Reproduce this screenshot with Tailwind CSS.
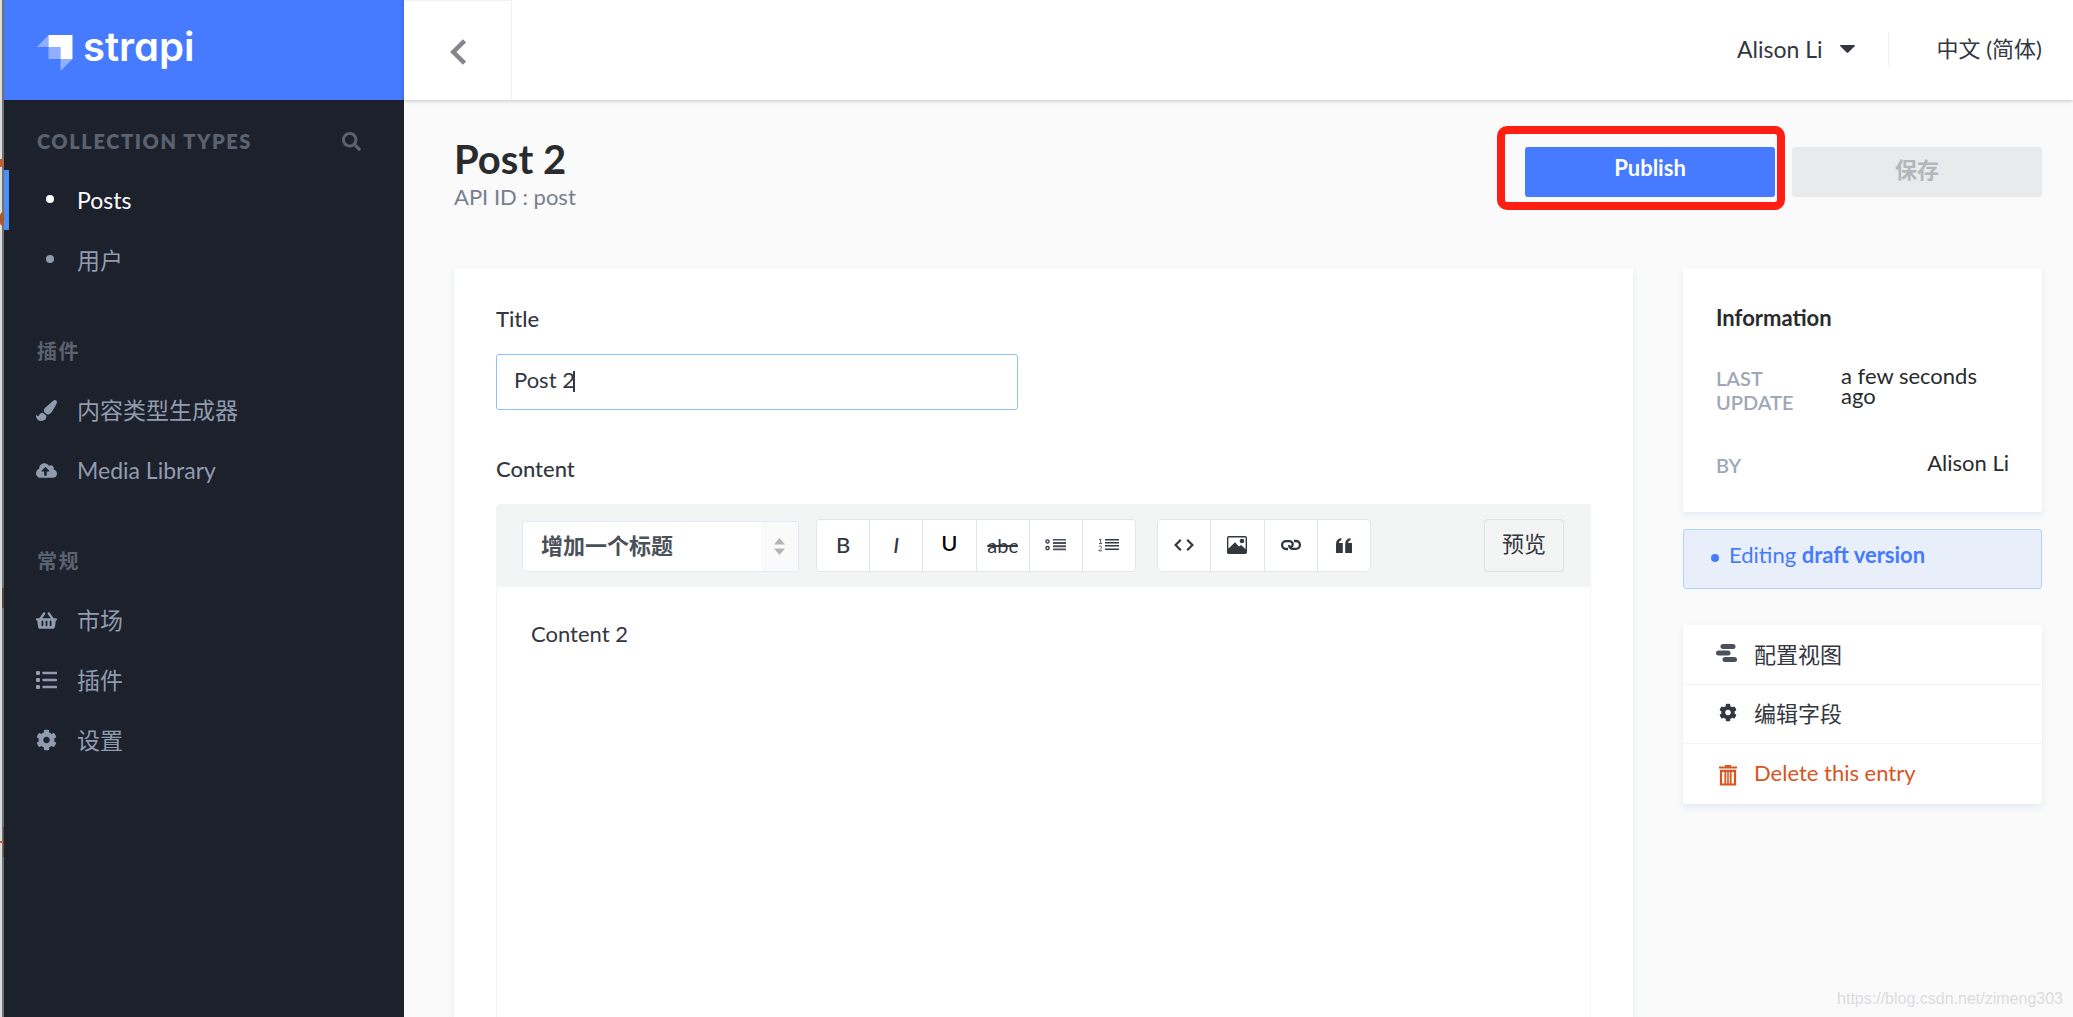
<!DOCTYPE html>
<html lang="zh-CN">
<head>
<meta charset="utf-8">
<title>Post 2</title>
<script src="https://cdn.jsdelivr.net/npm/@tailwindcss/browser@4"></script>
</head>
<body class="relative flex min-h-screen bg-[#fafafb] font-['Lato','Noto_Sans_CJK_SC',sans-serif] text-[22px] leading-7 text-[#333740]">
<svg class="hidden">
  <symbol id="cog" viewBox="0 0 512 512"><path fill="currentColor" d="M487.4 315.7l-42.6-24.6c4.3-23.2 4.3-47 0-70.2l42.6-24.6c4.9-2.8 7.1-8.6 5.5-14-11.1-35.6-30-67.8-54.7-94.6-3.8-4.1-10-5.1-14.8-2.3L380.8 110c-17.9-15.4-38.5-27.3-60.8-35.1V25.8c0-5.6-3.9-10.5-9.4-11.7-36.7-8.2-74.3-7.8-109.2 0-5.5 1.2-9.4 6.1-9.4 11.7V75c-22.2 7.9-42.8 19.8-60.8 35.1L88.7 85.5c-4.9-2.8-11-1.9-14.8 2.3-24.7 26.7-43.6 58.9-54.7 94.6-1.7 5.4.6 11.2 5.5 14L67.3 221c-4.3 23.2-4.3 47 0 70.2l-42.6 24.6c-4.9 2.8-7.1 8.6-5.5 14 11.1 35.6 30 67.8 54.7 94.6 3.8 4.1 10 5.1 14.8 2.3l42.6-24.6c17.9 15.4 38.5 27.3 60.8 35.1v49.2c0 5.6 3.9 10.5 9.4 11.7 36.7 8.2 74.3 7.8 109.2 0 5.5-1.2 9.4-6.1 9.4-11.7v-49.2c22.2-7.9 42.8-19.8 60.8-35.1l42.6 24.6c4.9 2.8 11 1.9 14.8-2.3 24.7-26.7 43.6-58.9 54.7-94.6 1.5-5.5-.7-11.3-5.6-14.1zM256 336c-44.1 0-80-35.9-80-80s35.9-80 80-80 80 35.9 80 80-35.9 80-80 80z"/></symbol>
</svg>

<div class="relative w-1 shrink-0 border-r-2 border-[#707172] bg-[#dadedd]">
  <span class="absolute top-[159px] left-0 h-2 w-1 bg-[#b8623a]"></span>
  <span class="absolute top-[212px] left-0 h-3.5 w-1 rounded-l-full bg-[#a85a2c]"></span>
  <span class="absolute top-[588px] left-0.5 h-5 w-0.5 bg-[#5a4636]"></span>
  <span class="absolute top-[841px] left-0 h-0.5 w-1 bg-[#c0622e]"></span>
  <span class="absolute top-[827px] left-[3px] h-[30px] w-px bg-[#6b4a36]"></span>
</div>

<aside class="w-[400px] shrink-0 bg-[#1c212c] text-[23px] text-[#919bae]">
  <a href="#" class="flex h-[100px] items-center bg-[#467aff] pl-[33px] text-white">
    <svg class="mt-1.5 h-9 w-9 shrink-0" viewBox="0 0 36 36" fill="#fff">
      <path d="M11.500 0H35.500V24H23.500V12H11.500z"/>
      <path opacity=".4" d="M11.500 12h12v12h-12zM0 12L11.500 0V12zM23.500 24h12L23.500 36z"/>
    </svg>
    <span class="mb-1.5 ml-2.5 font-['Inter',sans-serif] text-[40px] leading-[48px] font-semibold [font-feature-settings:'cv11']">strapi</span>
  </a>

  <nav class="pt-[29px]">
    <div class="mb-[17px] flex h-6 items-center justify-between pr-[43px] pl-[33px] text-[#5b626f]">
      <h2 class="text-xl leading-6 font-extrabold tracking-[0.08em]">COLLECTION TYPES</h2>
      <button aria-label="Search"><svg class="h-[19px] w-[19px]" viewBox="0 0 512 512" fill="currentColor"><path d="M505 442.700L405.300 343c-4.500-4.500-10.600-7-17-7H372c27.600-35.300 44-79.700 44-128C416 93.100 322.900 0 208 0S0 93.100 0 208s93.100 208 208 208c48.300 0 92.700-16.400 128-44v16.300c0 6.400 2.500 12.500 7 17l99.700 99.700c9.400 9.400 24.600 9.400 33.900 0l28.300-28.300c9.400-9.400 9.400-24.600.1-34zM208 336c-70.700 0-128-57.200-128-128 0-70.700 57.200-128 128-128 70.700 0 128 57.200 128 128 0 70.700-57.200 128-128 128z"/></svg></button>
    </div>
    <a href="#" class="flex h-[60px] items-center border-l-[5px] border-[#4e8ff5] pl-[37px] text-white">
      <span class="mb-0.5 mr-[23px] h-2 w-2 rounded-full bg-current"></span><span>Posts</span>
    </a>
    <a href="#" class="flex h-[60px] items-center pl-[42px]">
      <span class="mb-0.5 mr-[23px] h-2 w-2 rounded-full bg-current"></span><span>用户</span>
    </a>

    <h2 class="mt-[49px] mb-[17px] pl-[33px] text-xl leading-6 font-bold tracking-[0.08em] text-[#5b626f]">插件</h2>
    <a href="#" class="flex h-[60px] items-center gap-5 pl-8">
      <svg class="h-[21px] w-[21px]" viewBox="0 0 512 512" fill="currentColor"><path d="M167.020 309.340c-40.120 2.580-76.530 17.860-97.190 72.300-2.350 6.210-8 9.980-14.590 9.980-11.110 0-45.460-27.670-55.250-34.350C0 439.620 37.930 512 128 512c75.860 0 128-43.770 128-120.190 0-3.110-.65-6.080-.97-9.130l-88.010-73.340zM457.890 0c-15.160 0-29.370 6.710-40.210 16.450C213.270 199.050 192 203.340 192 257.090c0 13.700 3.250 26.760 8.730 38.700l63.820 53.180c7.210 1.800 14.640 3.030 22.390 3.030 62.110 0 98.110-45.470 211.160-256.460 7.380-14.350 13.900-29.850 13.900-45.990C512 20.640 486 0 457.890 0z"/></svg>
      <span>内容类型生成器</span>
    </a>
    <a href="#" class="flex h-[60px] items-center gap-5 pl-8">
      <svg class="h-[17px] w-[21px]" viewBox="0 0 640 512" fill="currentColor"><path d="M537.600 226.600c4.100-10.700 6.400-22.400 6.400-34.600 0-53-43-96-96-96-19.700 0-38.100 6-53.300 16.200C367 64.200 315.300 32 256 32c-88.400 0-160 71.600-160 160 0 2.700.1 5.400.2 8.100C40.200 219.800 0 273.200 0 336c0 79.500 64.500 144 144 144h368c70.700 0 128-57.300 128-128 0-61.900-44-113.600-102.400-125.400zM393.400 288H328v112c0 8.800-7.200 16-16 16h-48c-8.800 0-16-7.200-16-16V288h-65.400c-14.300 0-21.400-17.200-11.300-27.300l105.400-105.400c6.200-6.200 16.400-6.200 22.600 0l105.400 105.400c10.100 10.100 2.900 27.300-11.300 27.300z"/></svg>
      <span>Media Library</span>
    </a>

    <h2 class="mt-[49px] mb-[17px] pl-[33px] text-xl leading-6 font-bold tracking-[0.08em] text-[#5b626f]">常规</h2>
    <a href="#" class="flex h-[60px] items-center gap-5 pl-8">
      <svg class="h-[19px] w-[21px]" viewBox="0 0 576 512" fill="currentColor"><path d="M576 216v16c0 13.255-10.745 24-24 24h-8l-26.113 182.788C514.509 462.435 494.257 480 470.370 480H105.630c-23.887 0-44.139-17.565-47.518-41.212L32 256h-8c-13.255 0-24-10.745-24-24v-16c0-13.255 10.745-24 24-24h67.341l106.780-146.821c10.395-14.292 30.407-17.453 44.701-7.058 14.293 10.395 17.453 30.408 7.058 44.701L170.477 192h235.046L326.120 82.821c-10.395-14.292-7.234-34.306 7.059-44.701 14.291-10.395 34.306-7.235 44.701 7.058L484.659 192H552c13.255 0 24 10.745 24 24zM312 392V280c0-13.255-10.745-24-24-24s-24 10.745-24 24v112c0 13.255 10.745 24 24 24s24-10.745 24-24zm112 0V280c0-13.255-10.745-24-24-24s-24 10.745-24 24v112c0 13.255 10.745 24 24 24s24-10.745 24-24zm-224 0V280c0-13.255-10.745-24-24-24s-24 10.745-24 24v112c0 13.255 10.745 24 24 24s24-10.745 24-24z"/></svg>
      <span>市场</span>
    </a>
    <a href="#" class="flex h-[60px] items-center gap-5 pl-8">
      <svg class="h-[18px] w-[21px]" viewBox="0 0 21 18" fill="currentColor"><rect width="4" height="4" rx="1"/><rect y="7" width="4" height="4" rx="1"/><rect y="14" width="4" height="4" rx="1"/><rect x="6.500" y=".7" width="14.500" height="2.600" rx=".6"/><rect x="6.500" y="7.700" width="14.500" height="2.600" rx=".6"/><rect x="6.500" y="14.700" width="14.500" height="2.600" rx=".6"/></svg>
      <span>插件</span>
    </a>
    <a href="#" class="flex h-[60px] items-center gap-5 pl-8">
      <svg class="h-[22px] w-[21px]"><use href="#cog"/></svg>
      <span>设置</span>
    </a>
  </nav>
</aside>

<div class="flex min-w-0 flex-1 flex-col">
  <header class="z-10 flex h-[100px] shrink-0 items-center bg-white pr-[31px] pb-0.5 shadow-[0_1px_4px_rgba(0,0,0,0.22)]">
    <button aria-label="Back" class="-mb-0.5 flex h-[100px] w-[108px] items-center justify-center border-t border-r border-[#f1f1f3] text-[#85868b]">
      <svg class="mt-0.5 h-[26px] w-4" viewBox="0 0 16 26" fill="none" stroke="currentColor" stroke-width="4.500"><path d="M14.500 1.800L3.300 13L14.500 24.200"/></svg>
    </button>
    <button class="ml-auto flex h-[34px] items-center border-r border-[#f1f1f3] pr-[33px]">
      <span class="text-[23px]">Alison Li</span>
      <svg class="ml-[17px] h-2 w-[15px]" viewBox="0 0 15 8" fill="currentColor"><path d="M.8 0h13.400c.8 0 1 .8.500 1.300L8.300 7.600c-.5.500-1.100.5-1.600 0L.3 1.300C-.2.800 0 0 .8 0z"/></svg>
    </button>
    <button class="pl-12">中文 (简体)</button>
  </header>

  <main class="flex flex-1 flex-col pt-9 pr-[31px] pl-[50px]">
    <div class="flex h-[132px] items-start justify-between">
      <div>
        <h1 class="text-[40px] leading-[46px] font-bold text-[#292b2c]">Post 2</h1>
        <p class="mt-px text-[#787e8f]">API ID : post</p>
      </div>
      <div class="mt-[11px] flex gap-[17px]">
        <div class="relative">
          <button class="h-[50px] w-[250px] rounded-[3px] bg-[#467aff] pb-2 font-bold text-white">Publish</button>
          <span class="pointer-events-none absolute -top-[21px] -right-2.5 -bottom-[13px] -left-7 rounded-[10px] border-8 border-[#ff1f12]"></span>
        </div>
        <button disabled class="h-[50px] w-[250px] rounded-[3px] bg-[#e9eaeb] pb-1 font-bold text-[#b4b6ba]">保存</button>
      </div>
    </div>

    <div class="flex flex-1 gap-[50px]">
      <section class="flex min-w-0 flex-1 flex-col rounded-t-[3px] bg-white px-[42px] pt-[37px] shadow-[0_3px_7px_#e3e9f3]">
        <label for="title" class="font-medium">Title</label>
        <div class="relative mt-[21px] w-[522px]">
          <input id="title" type="text" value="Post 2" class="h-14 w-full rounded-[3px] border border-[#8dc1fb] px-[17px] pb-1.5 outline-none">
          <span class="absolute top-[17px] left-[77px] h-[21px] w-0.5 bg-[#333740]"></span>
        </div>
        <label for="content" class="mt-[45px] font-medium">Content</label>
        <div class="mt-[21px] flex flex-1 flex-col rounded-t-[3px] border border-b-0 border-[#f3f4f4]">
          <div class="flex h-[82px] items-center bg-[#f3f4f4] pr-[26px] pb-0.5 pl-[25px]">
            <div class="relative mt-0.5">
              <select aria-label="增加一个标题" class="h-[51px] w-[277px] appearance-none rounded-[4px] border border-[#e3e6f3] bg-white pl-[18px] font-bold text-[#4b515a]"><option>增加一个标题</option></select>
              <span class="pointer-events-none absolute top-px right-px bottom-px flex w-[37px] items-center justify-center rounded-r-[4px] bg-[#fafafb] text-[#b3b5b9]">
                <svg class="h-[17px] w-[11px]" viewBox="0 0 11 17" fill="currentColor"><path d="M5.500 0L11 6.500H0zM5.500 17L0 10.500h11z"/></svg>
              </span>
            </div>
            <div class="ml-[17px] flex h-[53px] w-[320px] divide-x divide-[#e5e6e6] overflow-hidden rounded-[4px] border border-[#e5e6e6] bg-white">
              <button class="flex flex-1 items-center justify-center font-medium">B</button>
              <button class="flex flex-1 items-center justify-center font-medium italic">I</button>
              <button class="flex flex-1 items-center justify-center pb-1 font-medium text-black">U</button>
              <button class="flex flex-1 items-center justify-center text-xl line-through">abc</button>
              <button aria-label="Bulleted list" class="flex flex-1 items-center justify-center">
                <svg class="h-3 w-[21px]" viewBox="0 0 21 12"><g fill="none" stroke="#333740" stroke-width="1.300"><circle cx="2.500" cy="2.400" r="1.600"/><circle cx="2.500" cy="9.100" r="1.600"/></g><path fill="#4b4f58" d="M8 0h13v1.600H8zM8 3h13v2H8zM8 6.300h13v2H8zM8 9.600h13v1.600H8z"/></svg>
              </button>
              <button aria-label="Numbered list" class="flex flex-1 items-center justify-center">
                <svg class="h-3.5 w-[21px]" viewBox="0 0 21 14"><path fill="none" stroke="#555961" d="M1 1.800L2.600 1V5.500M1 5.600H4.200M.8 8.800C1.300 7.800 3.600 7.800 3.500 9.300C3.400 10.800 1.500 11.500 .8 12.800H4.200"/><path fill="#333740" d="M7 1h14v1.500H7zM7 4h14v1.500H7zM7 7h14v1.500H7zM7 10.500h14V12H7z"/></svg>
              </button>
            </div>
            <div class="ml-[21px] flex h-[53px] w-[214px] divide-x divide-[#e5e6e6] overflow-hidden rounded-[4px] border border-[#e5e6e6] bg-white">
              <button aria-label="Code" class="flex flex-1 items-center justify-center">
                <svg class="h-3 w-5" viewBox="0 0 20 12" fill="none" stroke="#333740" stroke-width="2.200"><path d="M6.800 .8L1.600 6L6.800 11.200M13.200 .8L18.400 6L13.200 11.200"/></svg>
              </button>
              <button aria-label="Image" class="flex flex-1 items-center justify-center">
                <svg class="h-[18px] w-5" viewBox="0 0 20 18"><rect x=".7" y=".7" width="18.600" height="16.600" rx="1" fill="none" stroke="#333740" stroke-width="1.400"/><path fill="#333740" d="M1 13L8 6.200L12 10.400L14 9L19 13.500V17H1z"/><circle cx="15" cy="5" r="2.300" fill="#333740"/></svg>
              </button>
              <button aria-label="Link" class="flex flex-1 items-center justify-center">
                <svg class="h-3 w-5" viewBox="0 0 20 12" fill="none" stroke="#333740" stroke-width="2.300"><path d="M7 10H5A3.900 3.900 0 0 1 5 2.200H8.500C11 2.200 12 4 11.600 6C11.400 7.200 10.600 7.600 9.800 7.200M13 2H15A3.900 3.900 0 0 1 15 9.800H11.500C9 9.800 8 8 8.400 6"/></svg>
              </button>
              <button aria-label="Quote" class="flex flex-1 items-center justify-center">
                <svg class="h-[15px] w-4" viewBox="0 0 16 15" fill="#333740"><path d="M0 15V6C0 2.500 1.800 .5 5.300 0V2.200C3.700 2.600 3 3.500 3 5H6.800V15zM9.200 15V6C9.200 2.500 11 .5 14.500 0V2.200C12.900 2.600 12.200 3.500 12.200 5H16V15z"/></svg>
              </button>
            </div>
            <button class="ml-auto h-[53px] w-20 rounded-[4px] border border-[#dddfe0] pb-0.5">预览</button>
          </div>
          <textarea id="content" class="w-full flex-1 resize-none px-[34px] pt-[33px] outline-none">Content 2</textarea>
        </div>
      </section>

      <div class="flex w-[359px] shrink-0 flex-col">
        <section class="h-[244px] rounded-[3px] bg-white px-[33px] pt-9 shadow-[0_3px_7px_#e3e9f3]">
          <h2 class="font-bold text-[#292b2c]">Information</h2>
          <dl class="text-[#292b2c]">
            <div class="mt-[34px] flex justify-between">
              <dt class="w-[100px] text-xl leading-6 font-semibold text-[#9ea7b8]">LAST UPDATE</dt>
              <dd class="w-[168px] leading-5">a few seconds ago</dd>
            </div>
            <div class="mt-[39px] flex justify-between">
              <dt class="text-xl leading-6 font-semibold text-[#9ea7b8]">BY</dt>
              <dd class="leading-5">Alison Li</dd>
            </div>
          </dl>
        </section>

        <p class="mt-[17px] flex h-[60px] items-center rounded-[3px] border border-[#aed4fb] bg-[#e8effa] pl-[27px] pb-2 text-[#467aff]">
          <span class="mt-1.5 mr-2.5 h-2 w-2 rounded-full bg-current"></span>
          <span>Editing <b class="font-bold">draft version</b></span>
        </p>

        <ul class="mt-9 divide-y divide-[#f3f4f5] rounded-[3px] bg-white shadow-[0_3px_7px_#e3e9f3]">
          <li><a href="#" class="flex h-[59px] items-center pl-[33px]">
            <svg class="mr-[17px] mb-1 h-[18px] w-[21px]" viewBox="0 0 21 18" fill="#4b515a"><rect x="4.500" width="15" height="5" rx="2.500"/><rect y="6.500" width="14.500" height="5" rx="2.500"/><rect x="6.500" y="13" width="14.500" height="5" rx="2.500"/></svg>
            <span>配置视图</span></a></li>
          <li><a href="#" class="flex h-[58px] items-center pl-9">
            <svg class="mr-[17px] mb-1 h-[19px] w-[18px]"><use href="#cog"/></svg>
            <span>编辑字段</span></a></li>
          <li><button class="flex h-[60px] w-full items-center pl-9 pb-0.5 text-[#d9541e]">
            <svg class="mr-[17px] mt-1 h-[21px] w-[18px]" viewBox="0 0 18 21" fill="none" stroke="currentColor"><path stroke-width="2.200" d="M0 2.500H18M2 5.800H16V19.500H2z"/><path stroke-width="1.800" d="M6 1H12M6.300 6V19M11.700 6V19"/><path stroke-width="1.600" d="M9 6V19"/></svg>
            <span>Delete this entry</span></button></li>
        </ul>
      </div>
    </div>
  </main>
</div>
<p class="pointer-events-none absolute right-2.5 bottom-1.5 font-['Liberation_Sans',sans-serif] text-base leading-6 text-[#dcdcdd]">https://blog.csdn.net/zimeng303</p>
</body>
</html>
